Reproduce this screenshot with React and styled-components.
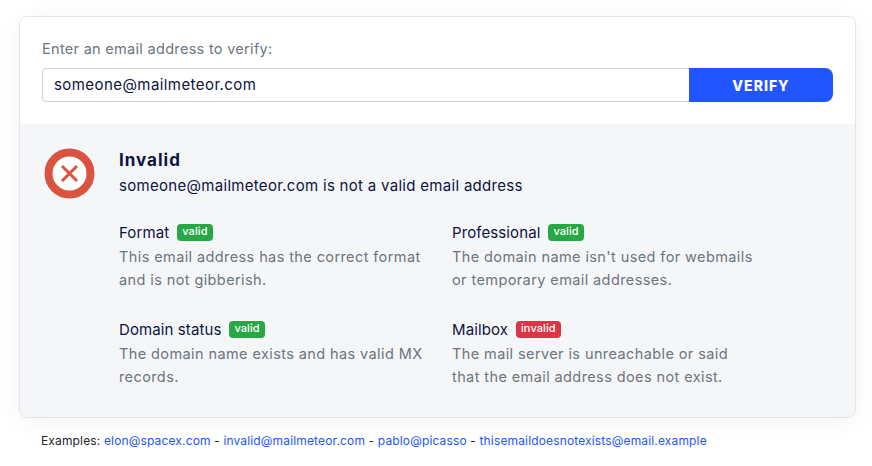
import React from "react"
import styled, { createGlobalStyle } from "styled-components"

const GlobalStyle = createGlobalStyle`
  html, body {
    margin: 0;
    padding: 0;
    background: #fff;
    font-family: Inter, "Open Sans", sans-serif;
  }
`

const Page = styled.div`
  width: 872px;
  height: 466px;
  padding: 16px 16px 0 19px;
  box-sizing: border-box;
  overflow: hidden;
`

const Card = styled.div`
  width: 837px;
  height: 402px;
  box-sizing: border-box;
  border: 1px solid #e3e5ea;
  border-radius: 8px;
  box-shadow: 0 4px 24px rgba(30, 40, 70, 0.05);
  overflow: hidden;
  display: flex;
  flex-direction: column;
`

const Form = styled.div`
  height: 107px;
  padding: 22px 22px 0;
  box-sizing: border-box;
  background: #fff;
`

const Label = styled.div`
  font-size: 14.5px;
  letter-spacing: 0.3px;
  line-height: 20px;
  color: #6c757d;
  margin-bottom: 9px;
`

const InputGroup = styled.div`
  display: flex;
  height: 34px;
`

const EmailField = styled.div`
  flex: 1;
  box-sizing: border-box;
  border: 1px solid #ced4da;
  border-right: 0;
  border-radius: 4px 0 0 4px;
  padding: 0 11px;
  font-size: 15px;
  letter-spacing: 0.43px;
  line-height: 31px;
  color: #0b1340;
`

const VerifyButton = styled.button`
  width: 144px;
  border: 0;
  padding: 0;
  border-radius: 0 8px 8px 0;
  background: #2155ff;
  color: #fff;
  font-family: inherit;
  font-size: 14px;
  font-weight: 800;
  letter-spacing: 1px;
`

const Result = styled.div`
  flex: 1;
  background: #f5f6f8;
  display: flex;
  padding: 24px 0 0 24px;
`

const IconWrap = styled.div`
  width: 51px;
  height: 51px;
  margin-right: 24px;
  flex-shrink: 0;
`

const Body = styled.div`
  flex: 1;
`

const Title = styled.div`
  font-size: 17px;
  letter-spacing: 1px;
  line-height: 24px;
  font-weight: 700;
  color: #0b1340;
`

const Summary = styled.div`
  font-size: 15px;
  letter-spacing: 0.3px;
  line-height: 22px;
  color: #0b1340;
  margin-top: 3px;
`

const ChecksGrid = styled.div`
  display: grid;
  grid-template-columns: 333px 310px;
  grid-auto-rows: 97px;
  margin-top: 23px;
`

const CheckHead = styled.div`
  display: flex;
  align-items: center;
  height: 24px;
  font-size: 15px;
  letter-spacing: 0.1px;
  color: #0b1340;
`

const Badge = styled.span`
  margin: 1px 0 0 8px;
  height: 17px;
  padding: 0 5px;
  border-radius: 4px;
  font-size: 11px;
  line-height: 15px;
  font-weight: 500;
  color: #fff;
  background: ${p => (p.$invalid ? "#dc3545" : "#28a745")};
`

const CheckText = styled.div`
  font-size: 14.5px;
  letter-spacing: 0.4px;
  line-height: 23px;
  color: #6c757d;
  margin-top: 1px;
  max-width: 305px;
`

const Examples = styled.div`
  font-size: 12px;
  letter-spacing: 0.15px;
  line-height: 16px;
  color: #212529;
  margin: 15px 0 0 22px;

  a {
    color: #2155ff;
    text-decoration: none;
  }
`

const CrossIcon = () => (
  <svg width="51" height="51" viewBox="0 0 51 51">
    <circle cx="25.5" cy="25.5" r="21" fill="#fff" stroke="#d95340" strokeWidth="8" />
    <path d="M18 18L33 33M33 18L18 33" stroke="#d95340" strokeWidth="3" fill="none" />
  </svg>
)

const checks = [
  { name: "Format", text: "This email address has the correct format and is not gibberish." },
  { name: "Professional", text: "The domain name isn't used for webmails or temporary email addresses." },
  { name: "Domain status", text: "The domain name exists and has valid MX records." },
  { name: "Mailbox", text: "The mail server is unreachable or said that the email address does not exist.", invalid: true },
]

const App = () => (
  <Page>
    <GlobalStyle />
    <Card>
      <Form>
        <Label>Enter an email address to verify:</Label>
        <InputGroup>
          <EmailField>someone@mailmeteor.com</EmailField>
          <VerifyButton>VERIFY</VerifyButton>
        </InputGroup>
      </Form>
      <Result>
        <IconWrap>
          <CrossIcon />
        </IconWrap>
        <Body>
          <Title>Invalid</Title>
          <Summary>someone@mailmeteor.com is not a valid email address</Summary>
          <ChecksGrid>
            {checks.map(c => (
              <div key={c.name}>
                <CheckHead>
                  {c.name}
                  <Badge $invalid={c.invalid}>{c.invalid ? "invalid" : "valid"}</Badge>
                </CheckHead>
                <CheckText>{c.text}</CheckText>
              </div>
            ))}
          </ChecksGrid>
        </Body>
      </Result>
    </Card>
    <Examples>
      Examples: <a href="#a">elon@spacex.com</a> - <a href="#b">invalid@mailmeteor.com</a> -{" "}
      <a href="#c">pablo@picasso</a> - <a href="#d">thisemaildoesnotexists@email.example</a>
    </Examples>
  </Page>
)

export default App
